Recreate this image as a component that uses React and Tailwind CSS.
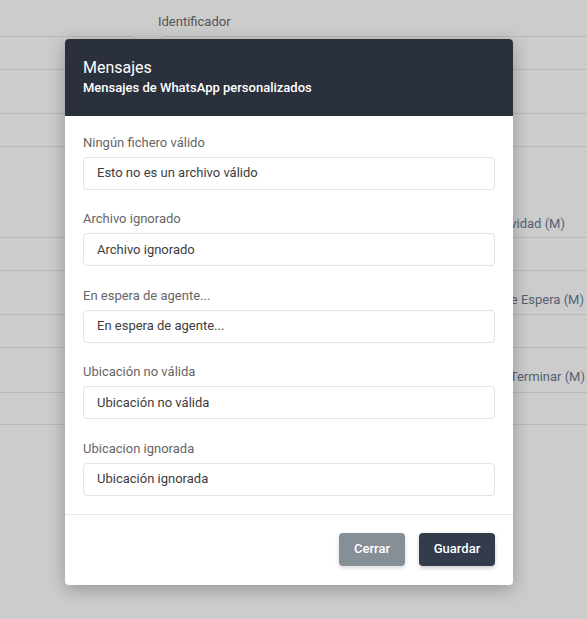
import React from "react";

const fields = [
  { label: "Ningún fichero válido", value: "Esto no es un archivo válido" },
  { label: "Archivo ignorado", value: "Archivo ignorado" },
  { label: "En espera de agente...", value: "En espera de agente..." },
  { label: "Ubicación no válida", value: "Ubicación no válida" },
  { label: "Ubicacion ignorada", value: "Ubicación ignorada" },
];

export default function App() {
  return (
    <div className="relative h-[619px] w-[587px] overflow-hidden bg-[#cccccc] font-['Roboto','Liberation_Sans',sans-serif] text-[13px]">
      {/* dimmed page behind the modal */}
      <div className="flex flex-col">
        <div className="ml-[158px] pt-[13px] leading-[18px] text-[#555]">Identificador</div>
        <div className="mt-[5px] flex h-[34px]">
          <div className="-ml-[10px] w-[146px] rounded-[4px] border border-[#b9b9b9]" />
          <div className="ml-[24px] -mr-[10px] flex-1 rounded-[4px] border border-[#b9b9b9]" />
        </div>
        <div className="-mx-[10px] mt-[43px] h-[34px] border-y border-[#b9b9b9]" />
        <div className="mt-[68px] pr-[22px] text-right leading-[18px] text-[#56606f]">Tiempo de Inactividad (M)</div>
        <div className="-mx-[10px] mt-[4px] h-[34px] border-y border-[#b9b9b9]" />
        <div className="mt-[20px] pr-[3px] text-right leading-[18px] text-[#56606f]">Tiempo de Espera (M)</div>
        <div className="-mx-[10px] mt-[5px] h-[34px] border-y border-[#b9b9b9]" />
        <div className="mt-[20px] pr-[2px] text-right leading-[18px] text-[#56606f]">Tiempo antes de Terminar (M)</div>
        <div className="-mx-[10px] mt-[6px] h-[33px] border-y border-[#b9b9b9]" />
      </div>

      {/* modal */}
      <div className="absolute left-[65px] top-[39px] w-[448px] overflow-hidden rounded-[4px] bg-white shadow-[0_4px_18px_rgba(0,0,0,0.28)]">
        <div className="bg-[#2a303c] px-[18px] pb-[18px] pt-[19px] text-white">
          <div className="text-[16px] leading-[20px]">Mensajes</div>
          <div className="text-[13px] font-medium leading-[20px]">Mensajes de WhatsApp personalizados</div>
        </div>
        <div className="flex flex-col gap-[20.5px] px-[18px] pb-[18px] pt-[17.5px]">
          {fields.map((f) => (
            <div key={f.label} className="flex flex-col gap-[5px]">
              <div className="leading-[18px] text-[#666]">{f.label}</div>
              <div className="flex h-[33px] items-center rounded-[4px] border border-[#e3e3e3] px-[13px] text-[#3d3d3d]">
                {f.value}
              </div>
            </div>
          ))}
        </div>
        <div className="flex justify-end gap-[14px] border-t border-[#e8e8e8] px-[18px] pb-[19px] pt-[18px]">
          <button className="h-[33px] w-[66px] rounded-[4px] bg-[#868e96] text-[13px] font-medium text-white shadow-[0_2px_4px_rgba(0,0,0,0.15)]">
            Cerrar
          </button>
          <button className="h-[33px] w-[76px] rounded-[4px] bg-[#343b4b] text-[13px] font-medium text-white shadow-[0_2px_4px_rgba(0,0,0,0.2)]">
            Guardar
          </button>
        </div>
      </div>
    </div>
  );
}
